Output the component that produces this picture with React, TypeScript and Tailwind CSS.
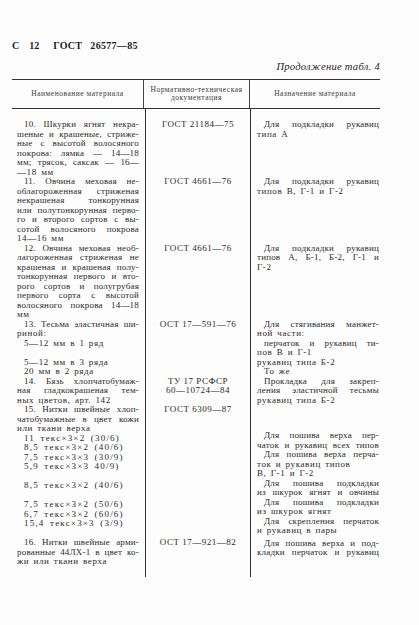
import React from "react";

type Line = { t: string; i?: boolean; j?: boolean };

const L = (t: string, i = false, j = false): Line => ({ t, i, j });
const blank = (n: number): Line[] => Array.from({ length: n }, () => L(""));

// column 1: наименование материала
const col1: Line[] = [
  L("10. Шкурки ягнят некра-", true, true),
  L("шеные и крашеные, стриже-", false, true),
  L("ные с высотой волосяного", false, true),
  L("покрова: лямка — 14—18", false, true),
  L("мм; трясок, саксак — 16—", false, true),
  L("—18 мм"),
  L("11. Овчина меховая не-", true, true),
  L("облагороженная стриженая", false, true),
  L("некрашеная тонкорунная", false, true),
  L("или полутонкорунная перво-", false, true),
  L("го и второго сортов с вы-", false, true),
  L("сотой волосяного покрова", false, true),
  L("14—16 мм"),
  L("12. Овчина меховая необ-", true, true),
  L("лагороженная стриженая не", false, true),
  L("крашеная и крашеная полу-", false, true),
  L("тонкорунная первого и вто-", false, true),
  L("рого сортов и полугрубая", false, true),
  L("первого сорта с высотой", false, true),
  L("волосяного покрова 14—18", false, true),
  L("мм"),
  L("13. Тесьма эластичная ши-", true, true),
  L("риной:"),
  L("5—12 мм в 1 ряд", true),
  L(""),
  L("5—12 мм в 3 ряда", true),
  L("20 мм в 2 ряда", true),
  L("14. Бязь хлопчатобумаж-", true, true),
  L("ная гладкокрашеная тем-", false, true),
  L("ных цветов, арт. 142"),
  L("15. Нитки швейные хлоп-", true, true),
  L("чатобумажные в цвет кожи", false, true),
  L("или ткани верха"),
  L("11 текс×3×2 (30/6)", true),
  L("8,5 текс×3×2 (40/6)", true),
  L("7,5 текс×3×3 (30/9)", true),
  L("5,9 текс×3×3 40/9)", true),
  L(""),
  L("8,5 текс×3×2 (40/6)", true),
  L(""),
  L("7,5 текс×3×2 (50/6)", true),
  L("6,7 текс×3×2 (60/6)", true),
  L("15,4 текс×3×3 (3/9)", true),
  L(""),
  L("16. Нитки швейные арми-", true, true),
  L("рованные 44ЛХ-1 в цвет ко-", false, true),
  L("жи или ткани верха"),
];

// column 2: документация, by line index
const docs: Record<number, string> = {
  0: "ГОСТ 21184—75",
  6: "ГОСТ 4661—76",
  13: "ГОСТ 4661—76",
  21: "ОСТ 17—591—76",
  27: "ТУ 17 РСФСР",
  28: "60—10724—84",
  30: "ГОСТ 6309—87",
  44: "ОСТ 17—921—82",
};

const col3a: Line[] = [
  L("Для подкладки рукавиц", true, true),
  L("типа А"),
  ...blank(4),
  L("Для подкладки рукавиц", true, true),
  L("типов В, Г-1 и Г-2"),
  ...blank(5),
  L("Для подкладки рукавиц", true, true),
  L("типов А, Б-1, Б-2, Г-1 и", false, true),
  L("Г-2"),
  ...blank(5),
  L("Для стягивания манжет-", true, true),
  L("ной части:"),
  L("перчаток и рукавиц ти-", true, true),
  L("пов В и Г-1"),
  L("рукавиц типа Б-2"),
  L("То же", true),
  L("Прокладка для закреп-", true, true),
  L("ления эластичной тесьмы", false, true),
  L("рукавиц типа Б-2"),
];

const col3b: Line[] = [
  L("Для пошива верха пер-", true, true),
  L("чаток и рукавиц всех типов", false, true),
  L("Для пошива верха перча-", true, true),
  L("ток и рукавиц типов"),
  L("В, Г-1 и Г-2"),
  L("Для пошива подкладки", true, true),
  L("из шкурок ягнят и овчины", false, true),
  L("Для пошива подкладки", true, true),
  L("из шкурок ягнят"),
  L("Для скрепления перчаток", true, true),
  L("и рукавиц в пары"),
];

const col3c: Line[] = [
  L("Для пошива верха и под-", true, true),
  L("кладки перчаток и рукавиц", false, true),
];

function Lines({ lines }: { lines: Line[] }) {
  return (
    <>
      {lines.map((l, k) => {
        const wide = l.t.includes("×");
        return (
          <div
            key={k}
            className={
              "h-[9.5px] leading-[9.5px] whitespace-nowrap " +
              (l.i ? "pl-[7px] " : "") +
              (l.j
                ? "text-justify [text-align-last:justify] tracking-[0.2px]"
                : wide
                  ? "tracking-[1.2px] [word-spacing:2px]"
                  : "tracking-[0.6px] [word-spacing:1.5px]")
            }
          >
            {l.t || "\u00a0"}
          </div>
        );
      })}
    </>
  );
}

export default function App() {
  return (
    <div className="w-[419px] h-[625px] bg-[#fdfdfd] text-[#2a2a2a] font-['Liberation_Serif',serif] overflow-hidden">
      {/* Page header */}
      <div className="pt-[40px] pl-[12px] flex items-baseline text-[10px] font-bold leading-[12px] text-[#1e1e1e]">
        <span>С</span>
        <span className="ml-[10px]">12</span>
        <span className="ml-[14px] tracking-[0.3px]">ГОСТ</span>
        <span className="ml-[8px] tracking-[0.3px]">26577—85</span>
      </div>
      <div className="w-[380px] mt-[9px] text-right text-[10.5px] leading-[12px] italic tracking-[0.3px] text-[#1e1e1e]">
        Продолжение табл. 4
      </div>

      {/* Table */}
      <div className="ml-[12px] w-[368px] mt-[6px]">
        <div className="grid grid-cols-[132px_106px_130px] h-[30px] border-t-[1.5px] border-b border-[#333] text-[7.5px] tracking-[0.5px] text-[#3a3a3a]">
          <div className="flex items-center justify-center border-r border-[#444]">Наименование материала</div>
          <div className="flex flex-col items-center justify-center leading-[8px] border-r border-[#444]">
            <span>Нормативно-техническая</span>
            <span>документация</span>
          </div>
          <div className="flex items-center justify-center">Назначение материала</div>
        </div>

        <div className="grid grid-cols-[134px_105px_129px] h-[468px] text-[9px]">
          <div className="border-r border-[#333] pt-[11px] pl-[5px] pr-[6px]">
            <Lines lines={col1} />
          </div>
          <div className="border-r border-[#333] pt-[11px] tracking-[0.5px]">
            {col1.map((_, k) => (
              <div key={k} className="h-[9.5px] leading-[9.5px] text-center whitespace-nowrap">
                {docs[k] ?? "\u00a0"}
              </div>
            ))}
          </div>
          <div className="pt-[11px] pl-[6px] pr-[1px]">
            <Lines lines={col3a} />
            <div className="h-[26px]" />
            <Lines lines={col3b} />
            <div className="h-[3px]" />
            <Lines lines={col3c} />
          </div>
        </div>
      </div>
    </div>
  );
}
